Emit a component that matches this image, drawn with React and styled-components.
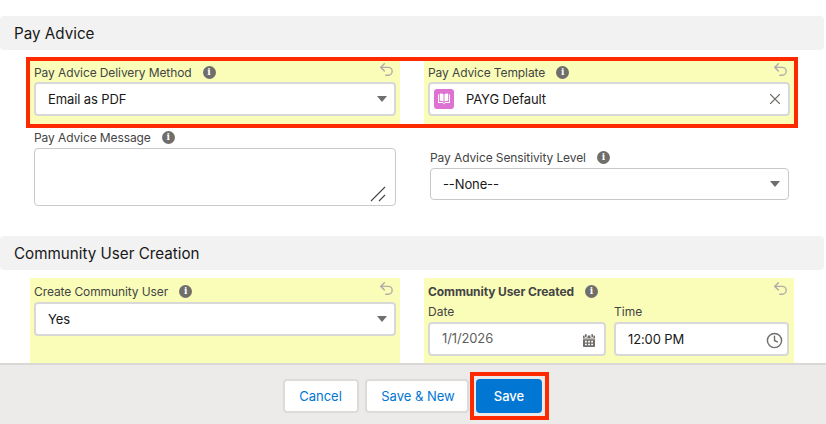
import React from 'react';
import styled, { createGlobalStyle } from 'styled-components';
import { Undo2, X, Clock } from 'lucide-react';

const GlobalStyle = createGlobalStyle`
  html, body {
    margin: 0;
    padding: 0;
    background: #fff;
    font-family: "Inter", "Liberation Sans", sans-serif;
  }
  * { box-sizing: border-box; }
`;

const Page = styled.div`
  width: 826px;
  height: 424px;
  display: flex;
  flex-direction: column;
  overflow: hidden;
`;

const Body = styled.div`
  flex: 1;
  min-height: 0;
  overflow: hidden;
  padding-top: 16px;
`;

const SectionHeader = styled.h3`
  margin: 0 2px ${p => p.$mb || 11}px 0;
  height: 34px;
  padding-left: 14px;
  display: flex;
  align-items: center;
  background: #f3f2f2;
  border-radius: 4px;
  font-size: 15.2px;
  font-weight: 400;
  color: #181818;
`;

const Row = styled.div`
  width: 764px;
  margin-left: 30px;
  display: grid;
  grid-template-columns: 370px 370px;
  column-gap: 24px;
  margin-bottom: ${p => p.$mb || 0}px;
  outline: ${p => (p.$marked ? '4px solid #fd2a00' : 'none')};
`;

const Field = styled.div`
  padding: ${p => p.$top || 0}px 4px 0 ${p => p.$left || 4}px;
  background: ${p => (p.$changed ? '#f9fdb8' : 'transparent')};
  height: ${p => p.$height}px;
`;

const LabelRow = styled.div`
  height: 16px;
  margin-bottom: ${p => p.$mb || 2}px;
  display: flex;
  align-items: center;
  gap: 11px;
  font-size: 12px;
  letter-spacing: -0.1px;
  color: #444;
  font-weight: ${p => (p.$bold ? 700 : 400)};
`;

const InfoDot = styled.span`
  width: 13px;
  height: 13px;
  border-radius: 50%;
  background: #706e6b;
  color: #fff;
  font-size: 9px;
  font-weight: 800;
  display: flex;
  align-items: center;
  justify-content: center;
  font-family: "DejaVu Serif", serif;
`;

const Revert = styled(Undo2)`
  margin-left: auto;
  margin-right: 1px;
  margin-top: -5px;
  color: #b0adab;
`;

const Box = styled.div`
  height: 34px;
  background: #fff;
  border: 2px solid #d8d8d8;
  border-radius: 4px;
  display: flex;
  align-items: center;
  padding: 0 6px 0 ${p => p.$left || 12}px;
  font-size: 13px;
  letter-spacing: -0.12px;
  color: #181818;
`;

const PlainBox = styled(Box)`
  height: ${p => p.$height}px;
  width: ${p => (p.$width ? `${p.$width}px` : 'auto')};
  border: 1px solid #c9c9c9;
  padding: 0 7px 0 12px;
`;

const Caret = styled.span`
  margin-left: auto;
  width: 0;
  height: 0;
  border-left: 5px solid transparent;
  border-right: 5px solid transparent;
  border-top: 6px solid #706e6b;
  margin-right: 2px;
  transform: translateX(1px);
`;

const Grip = styled.svg`
  margin-left: auto;
  align-self: flex-end;
  margin-right: 2px;
  margin-bottom: 3px;
`;

const Tile = styled.span`
  width: 20px;
  height: 20px;
  border-radius: 3px;
  background: #dd72d3;
  display: flex;
  align-items: center;
  justify-content: center;
  margin-right: 12px;
`;

const Clear = styled(X)`
  margin-left: auto;
  margin-right: -2px;
  color: #706e6b;
`;

const Pair = styled.div`
  display: grid;
  grid-template-columns: 178px 175px;
  column-gap: 8px;
`;

const SubLabel = styled.div`
  height: 18px;
  margin-bottom: 2px;
  font-size: 12px;
  color: #444;
  display: flex;
  align-items: center;
`;

const DateText = styled.span`
  color: #5f5f5f;
  margin-top: -3px;
`;

const EndIcon = styled.span`
  margin-left: auto;
  margin-right: ${p => p.$mr || 0}px;
  margin-top: 2px;
  display: flex;
  color: #706e6b;
`;

const Footer = styled.footer`
  height: 61px;
  flex-shrink: 0;
  background: #ecebea;
  border-top: 2px solid #d9d8d7;
  display: flex;
  align-items: center;
  justify-content: center;
  padding-top: 2px;
  padding-left: 5px;
`;

const Button = styled.button`
  height: 34px;
  padding: 0 0 0 ${p => p.$pl || 0}px;
  width: ${p => p.$width}px;
  margin-left: ${p => p.$ml || 0}px;
  border-radius: 4px;
  border: 2px solid ${p => (p.$brand ? '#0176d3' : '#dddbda')};
  background: ${p => (p.$brand ? '#0176d3' : '#fff')};
  color: ${p => (p.$brand ? '#fff' : '#0176d3')};
  font-family: inherit;
  font-size: 13px;
  font-weight: ${p => (p.$brand ? 500 : 400)};
`;

const SaveFrame = styled.span`
  display: flex;
  margin-left: 1px;
  padding: 3px 3px 3px 2px;
  border: 4px solid #fd2a00;
`;

const Info = () => <InfoDot>i</InfoDot>;

const BookIcon = () => (
  <svg width="14" height="14" viewBox="0 0 14 14" fill="#fff">
    <path d="M1 2.5h1V10h4.2v1H1zM13 2.5h-1V10H7.8v1H13z" />
    <path d="M2.8 1.5c1.4-.3 2.8 0 3.7.7v7.2c-.9-.6-2.3-.9-3.7-.7zM11.2 1.5c-1.4-.3-2.8 0-3.7.7v7.2c.9-.6 2.3-.9 3.7-.7z" />
    <path d="M5.8 11h2.4L7 12.6z" />
  </svg>
);

const CalendarIcon = () => (
  <svg width="14" height="15" viewBox="0 0 14 15" fill="currentColor">
    <rect x="3" y="1" width="1.6" height="3" rx=".6" />
    <rect x="9.4" y="1" width="1.6" height="3" rx=".6" />
    <path d="M2 2.5h.6v2.2h3V2.5h2.8v2.2h3V2.5h.6c.6 0 1 .4 1 1v1.9H1V3.5c0-.6.4-1 1-1z" />
    <path fillRule="evenodd" d="M1 6.2h12v6.8c0 .6-.4 1-1 1H2c-.6 0-1-.4-1-1zM3 7.8v1.6h1.8V7.8zm3.1 0v1.6h1.8V7.8zm3.1 0v1.6H11V7.8zM3 10.7v1.6h1.8v-1.6zm3.1 0v1.6h1.8v-1.6zm3.1 0v1.6H11v-1.6z" />
  </svg>
);

const ResizeGrip = () => (
  <Grip width="16" height="16" viewBox="0 0 16 16" stroke="#444" strokeWidth="1.1" fill="none">
    <path d="M1 15L15 1M9 15l6-6" />
  </Grip>
);

export default function App() {
  return (
    <Page>
      <GlobalStyle />
      <Body>
        <SectionHeader>Pay Advice</SectionHeader>
        <Row $marked $mb={5}>
          <Field $changed $top={3} $height={63}>
            <LabelRow>
              Pay Advice Delivery Method <Info />
              <Revert size={17} />
            </LabelRow>
            <Box>
              Email as PDF
              <Caret />
            </Box>
          </Field>
          <Field $changed $top={3} $height={63}>
            <LabelRow>
              Pay Advice Template <Info />
              <Revert size={17} />
            </LabelRow>
            <Box $left={4}>
              <Tile><BookIcon /></Tile>
              PAYG Default
              <Clear size={18} strokeWidth={1.5} />
            </Box>
          </Field>
        </Row>
        <Row $mb={30}>
          <Field $height={77}>
            <LabelRow $mb={3}>
              Pay Advice Message <Info />
            </LabelRow>
            <PlainBox $height={58}>
              <ResizeGrip />
            </PlainBox>
          </Field>
          <Field $top={20} $left={6} $height={77}>
            <LabelRow $mb={3}>
              Pay Advice Sensitivity Level <Info />
            </LabelRow>
            <PlainBox $height={32} $width={359}>
              --None--
              <Caret />
            </PlainBox>
          </Field>
        </Row>
        <SectionHeader $mb={8}>Community User Creation</SectionHeader>
        <Row>
          <Field $changed $top={5} $height={90}>
            <LabelRow $mb={3}>
              Create Community User <Info />
              <Revert size={17} />
            </LabelRow>
            <Box>
              Yes
              <Caret />
            </Box>
          </Field>
          <Field $changed $top={5} $height={90}>
            <LabelRow $bold $mb={3}>
              Community User Created <Info />
              <Revert size={17} />
            </LabelRow>
            <Pair>
              <div>
                <SubLabel>Date</SubLabel>
                <Box>
                  <DateText>1/1/2026</DateText>
                  <EndIcon $mr={2}><CalendarIcon /></EndIcon>
                </Box>
              </div>
              <div>
                <SubLabel>Time</SubLabel>
                <Box>
                  12:00 PM
                  <EndIcon $mr={-2}><Clock size={17} strokeWidth={2} /></EndIcon>
                </Box>
              </div>
            </Pair>
          </Field>
        </Row>
      </Body>
      <Footer>
        <Button $width={76}>Cancel</Button>
        <Button $width={104} $ml={6} $pl={3}>Save &amp; New</Button>
        <SaveFrame>
          <Button $brand $width={66} $pl={1}>Save</Button>
        </SaveFrame>
      </Footer>
    </Page>
  );
}
